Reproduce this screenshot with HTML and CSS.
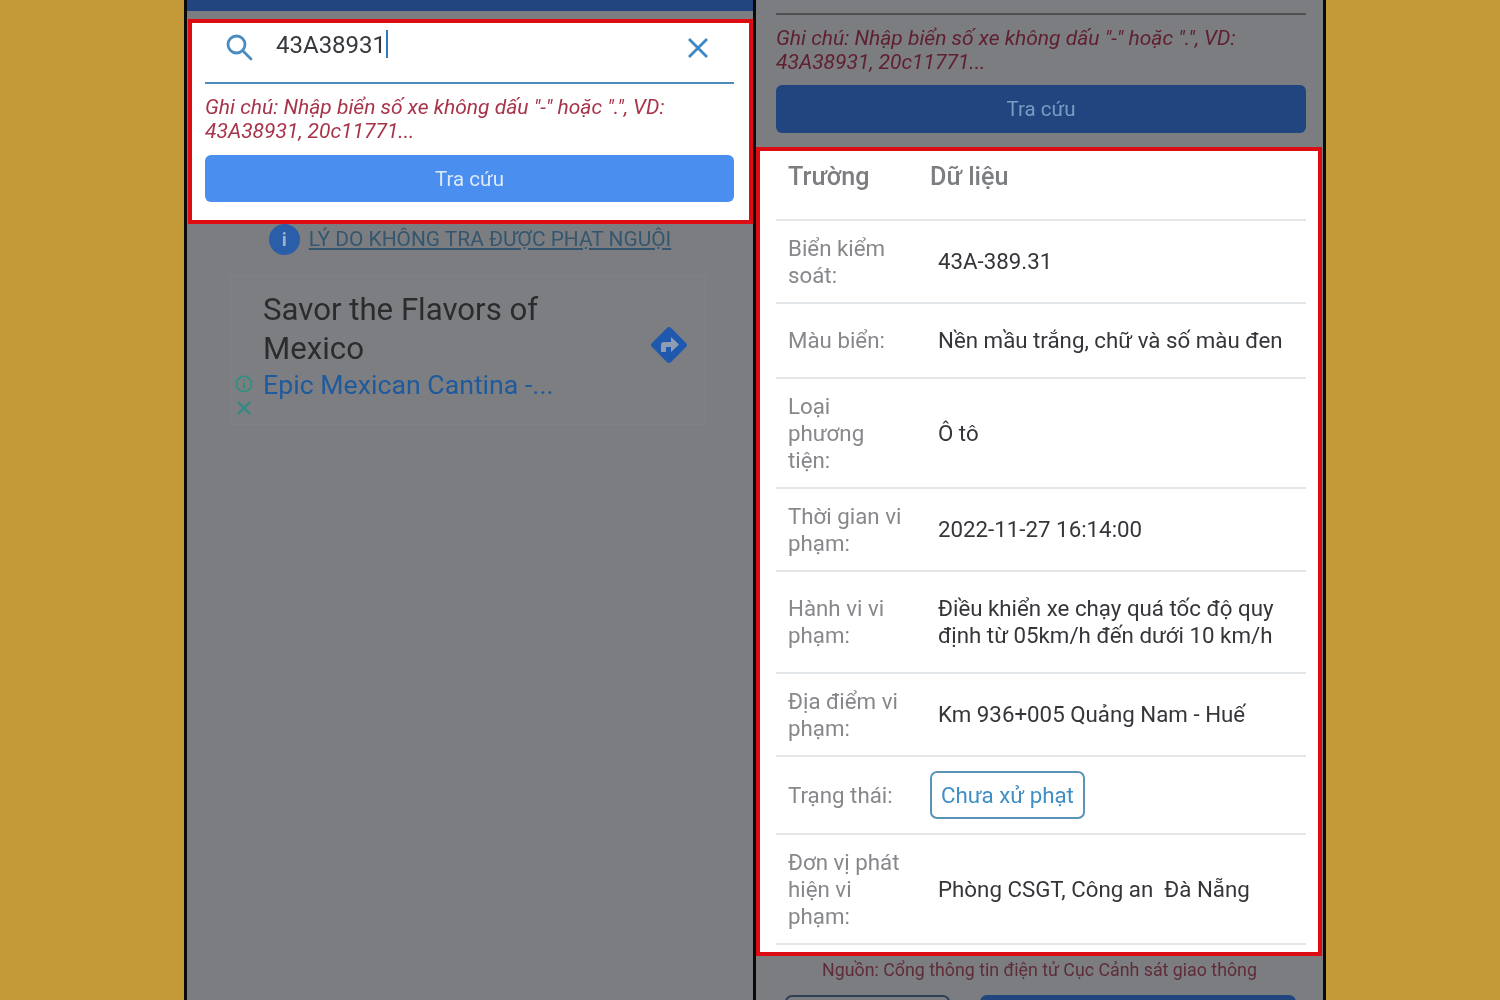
FILE: index.html
```html
<!DOCTYPE html>
<html lang="vi">
<head>
    <meta charset="UTF-8">
    <title>Tra cứu phạt nguội</title>
    <link rel="stylesheet" href="styles.css">
</head>
<body>

<div class="stage">

    <!-- left phone: search form -->
    <section class="phone phone-left">
        <div class="topbar"></div>
        <div class="box form-box">
            <div class="search-row">
                <svg class="search-icon" width="28" height="28" viewBox="0 0 28 28" fill="none" stroke="#4a8cc0" stroke-width="2.8">
                    <circle cx="11.5" cy="11.5" r="8.5"/>
                    <path d="M17.8 17.8 L26 26" stroke-linecap="round"/>
                </svg>
                <span class="search-text">43A38931</span><span class="caret"></span>
                <svg class="clear-icon" width="22" height="22" viewBox="0 0 22 22" fill="none" stroke="#3f87c4" stroke-width="2.8">
                    <path d="M2 2 L20 20 M20 2 L2 20"/>
                </svg>
            </div>
            <p class="note">Ghi chú: Nhập biển số xe không dấu "-" hoặc ".", VD: 43A38931, 20c11771...</p>
            <button class="btn" type="button">Tra cứu</button>
        </div>

        <div class="why-row">
            <span class="why-icon">i</span>
            <a class="why-link" href="#">LÝ DO KHÔNG TRA ĐƯỢC PHẠT NGUỘI</a>
        </div>

        <div class="ad">
            <div class="ad-side">
                <svg width="18" height="18" viewBox="0 0 18 18" fill="none" stroke="#2f8f83" stroke-width="1.8">
                    <circle cx="9" cy="9" r="7.6"/>
                    <path d="M9 4.5 V5.9 M9 7.6 V13.5" stroke-width="2"/>
                </svg>
                <svg width="16" height="16" viewBox="0 0 16 16" fill="none" stroke="#2f8a84" stroke-width="2.4">
                    <path d="M2 2 L14 14 M14 2 L2 14"/>
                </svg>
            </div>
            <div class="ad-text">
                <div class="ad-title">Savor the Flavors of<br>Mexico</div>
                <div class="ad-link">Epic Mexican Cantina -...</div>
            </div>
            <svg class="ad-go" width="42" height="42" viewBox="0 0 42 42">
                <rect x="7.5" y="7.5" width="27" height="27" rx="3" fill="#2058ad" transform="rotate(45 21 21)"/>
                <path d="M13 28 V21 Q13 18 16 18 H23 V13 L31 20.5 L23 28 V23 H18 V28 Z" fill="#8f9db4"/>
            </svg>
        </div>
    </section>

    <!-- right phone: result table -->
    <section class="phone phone-right">
        <div class="rule"></div>
        <p class="note note-dim">Ghi chú: Nhập biển số xe không dấu "-" hoặc ".", VD: 43A38931, 20c11771...</p>
        <button class="btn btn-dim" type="button">Tra cứu</button>

        <div class="box result-box">
            <table class="result">
                <thead>
                    <tr>
                        <th>Trường</th>
                        <th>Dữ liệu</th>
                    </tr>
                </thead>
                <tbody>
                    <tr>
                        <td class="label">Biển kiểm<br>soát:</td>
                        <td class="value">43A-389.31</td>
                    </tr>
                    <tr>
                        <td class="label">Màu biển:</td>
                        <td class="value">Nền mầu trắng, chữ và số màu đen</td>
                    </tr>
                    <tr>
                        <td class="label">Loại<br>phương<br>tiện:</td>
                        <td class="value">Ô tô</td>
                    </tr>
                    <tr>
                        <td class="label">Thời gian vi<br>phạm:</td>
                        <td class="value">2022-11-27 16:14:00</td>
                    </tr>
                    <tr>
                        <td class="label">Hành vi vi<br>phạm:</td>
                        <td class="value">Điều khiển xe chạy quá tốc độ quy định từ 05km/h đến dưới 10 km/h</td>
                    </tr>
                    <tr>
                        <td class="label">Địa điểm vi<br>phạm:</td>
                        <td class="value">Km 936+005 Quảng Nam - Huế</td>
                    </tr>
                    <tr>
                        <td class="label">Trạng thái:</td>
                        <td class="status"><span class="tag">Chưa xử phạt</span></td>
                    </tr>
                    <tr>
                        <td class="label">Đơn vị phát<br>hiện vi<br>phạm:</td>
                        <td class="value">Phòng CSGT, Công an&nbsp; Đà Nẵng</td>
                    </tr>
                </tbody>
            </table>
        </div>

        <p class="source">Nguồn: Cổng thông tin điện tử Cục Cảnh sát giao thông</p>
        <div class="bottom-btns">
            <div class="bottom-outline"></div>
            <div class="bottom-fill"></div>
        </div>
    </section>

</div>

</body>
</html>
```

FILE: styles.css
```css
* {
    box-sizing: border-box;
}

body {
    margin: 0;
    background: #c49a38;
    font-family: Roboto, "Noto Sans", sans-serif;
}

.stage {
    display: flex;
    height: 1000px;
    overflow: hidden;
    padding-left: 184px;
    filter: blur(0.6px);
}

.phone {
    height: 1000px;
    overflow: hidden;
    background: #7b7d81;
}

.phone-left {
    width: 572px;
    border-left: 3px solid #0a0a0a;
    border-right: 3px solid #0a0a0a;
}

.phone-right {
    width: 570px;
    border-right: 3px solid #0a0a0a;
    padding-top: 13px;
}

.topbar {
    height: 11px;
    background: #20457f;
}

.box {
    background: #ffffff;
    border: 4px solid #dc0c12;
}

.form-box {
    height: 205px;
    margin: 8px 0 0 1px;
    padding: 0 15px 18px 13px;
}

.search-row {
    display: flex;
    align-items: flex-start;
    height: 61px;
    border-bottom: 2px solid #4a8cbc;
    padding: 9px 25px 0 21px;
}

.search-icon {
    margin-top: 1px;
    margin-left: -1px;
}

.search-text {
    margin-left: 23px;
    font-size: 24px;
    line-height: 26px;
    color: #35383c;
}

.caret {
    width: 2px;
    height: 28px;
    margin-left: 0;
    margin-top: -2px;
    background: #2b7bbf;
}

.clear-icon {
    margin-left: auto;
    margin-top: 5px;
}

.note {
    margin: 11px 0 0;
    font-size: 21px;
    line-height: 24px;
    font-style: italic;
    color: #a8344a;
}

.btn {
    display: block;
    width: 100%;
    height: 47px;
    margin-top: 12px;
    border: none;
    border-radius: 6px;
    background: #4a8ff0;
    color: #dce9fb;
    font-family: Roboto, "Noto Sans", sans-serif;
    font-size: 20.5px;
}

.why-row {
    display: flex;
    align-items: center;
    justify-content: center;
    gap: 9px;
    height: 30px;
}

.why-icon {
    display: flex;
    align-items: center;
    justify-content: center;
    width: 31px;
    height: 31px;
    border-radius: 50%;
    background: #2a5ea8;
    color: #9fb1c9;
    font-size: 19px;
    font-weight: 700;
}

.why-link {
    font-size: 20.9px;
    color: #35566f;
}

.ad {
    display: flex;
    align-items: flex-start;
    width: 476px;
    height: 150px;
    margin: 21px 0 0 43px;
    padding: 14px 14px 8px 4px;
    background: #7c7e82;
    border: 1px solid #7f8185;
}

.ad-side {
    display: flex;
    flex-direction: column;
    align-items: center;
    gap: 7px;
    align-self: flex-end;
    width: 18px;
}

.ad-text {
    margin-left: 10px;
}

.ad-title {
    font-size: 31.2px;
    line-height: 39px;
    color: #2b2c2e;
}

.ad-link {
    font-size: 26.7px;
    line-height: 36px;
    margin-top: -1px;
    color: #1f5a9c;
}

.ad-go {
    margin-left: auto;
    margin-top: 34px;
    margin-right: 1px;
}

.rule {
    height: 2px;
    margin: 0 17px 0 20px;
    background: #4e5052;
}

.note-dim {
    margin: 11px 17px 0 20px;
    color: #5f1f2e;
}

.btn-dim {
    width: 530px;
    height: 48px;
    margin: 11px 0 0 20px;
    background: #20457f;
    color: #7a9cc0;
}

.result-box {
    height: 809px;
    margin: 14px 1px 0 0;
    padding: 0 12px 10px 16px;
}

.result {
    width: 530px;
    border-collapse: collapse;
    table-layout: fixed;
    font-size: 22.3px;
    line-height: 27px;
}

.result th {
    height: 69px;
    padding: 0 0 17px 0;
    text-align: left;
    font-size: 25.2px;
    font-weight: 500;
    color: #7c7e81;
}

.result th:first-child {
    width: 154px;
    padding-left: 12px;
}

.result tr {
    border-bottom: 2px solid #e4e7ea;
}

.label {
    padding: 13.5px 0 13.5px 12px;
    color: #86888b;
}

.value {
    padding: 23px 20px 23px 8px;
    color: #34363a;
}

.status {
    padding: 14px 0;
}

.tag {
    display: inline-block;
    height: 48px;
    padding: 0 9px;
    line-height: 44px;
    border: 2px solid #5b93b8;
    border-radius: 7px;
    color: #3f8fc4;
}

.source {
    margin: 3px 0 0;
    text-align: center;
    font-size: 17.8px;
    line-height: 22px;
    color: #5f2c38;
}

.bottom-btns {
    display: flex;
    gap: 30px;
    margin: 14px 0 0 29px;
}

.bottom-outline {
    width: 165px;
    height: 40px;
    border: 2px solid #2f3f55;
    border-radius: 7px;
}

.bottom-fill {
    width: 316px;
    height: 40px;
    border-radius: 7px;
    background: #20457f;
}
```
